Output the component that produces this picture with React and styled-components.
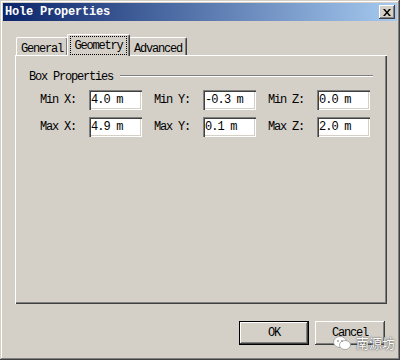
import React from 'react';
import styled, { createGlobalStyle } from 'styled-components';

const Global = createGlobalStyle`
  html, body { margin: 0; padding: 0; background: #D4D0C8; }
  body { font-family: "Liberation Mono", "DejaVu Sans Mono", monospace; }
`;

const Window = styled.div`
  position: relative;
  width: 400px;
  height: 360px;
  box-sizing: border-box;
  background: #d4d0c8;
  padding: 3px;
  display: flex;
  flex-direction: column;
  box-shadow: inset -1px -1px #404040, inset 1px 1px #d4d0c8,
    inset -2px -2px #808080, inset 2px 2px #ffffff;
`;

const TitleBar = styled.div`
  height: 18px;
  display: flex;
  align-items: center;
  justify-content: space-between;
  padding: 0 2px;
  background: linear-gradient(to right, #0a246a, #a6caf0);
`;

const Title = styled.span`
  color: #ffffff;
  font-weight: bold;
  font-size: 12px;
  letter-spacing: -0.2px;
  line-height: 18px;
`;

const CloseButton = styled.div`
  width: 16px;
  height: 14px;
  background: #d4d0c8;
  box-sizing: border-box;
  display: flex;
  align-items: center;
  justify-content: center;
  box-shadow: inset -1px -1px #404040, inset 1px 1px #ffffff,
    inset -2px -2px #808080;
`;

const Body = styled.div`
  flex: 1;
  display: flex;
  flex-direction: column;
  padding: 13px 10px 0 12px;
`;

const TabRow = styled.div`
  display: flex;
  align-items: flex-end;
  height: 21px;
  padding-left: 1px;
`;

const Tab = styled.div`
  position: relative;
  z-index: ${(p) => (p.$active ? 2 : 1)};
  box-sizing: border-box;
  width: ${(p) => p.$w}px;
  height: ${(p) => (p.$active ? 22 : 18)}px;
  margin: ${(p) => (p.$active ? '0 -1px -1px -1px' : '0')};
  background: #d4d0c8;
  border-top: 1px solid #ffffff;
  border-left: 1px solid #ffffff;
  border-right: 1px solid #404040;
  border-radius: 2px 2px 0 0;
  box-shadow: inset -1px 0 #808080;
  display: flex;
  align-items: ${(p) => (p.$active ? 'flex-start' : 'center')};
  justify-content: center;
  padding-top: ${(p) => (p.$active ? '2px' : '4px')};
  font-size: 12px;
  letter-spacing: -1.2px;
  color: #000;
`;

const FocusText = styled.span`
  outline: 1px dotted #000;
  padding: 2px 3px 1px 3px;
  line-height: 14px;
`;

const Panel = styled.div`
  height: 249px;
  box-sizing: border-box;
  background: #d4d0c8;
  box-shadow: inset 1px 1px #ffffff, inset -1px -1px #404040,
    inset -2px -2px #808080;
  padding: 16px 14px 0 14px;
  display: flex;
  flex-direction: column;
`;

const GroupHeader = styled.div`
  display: flex;
  align-items: center;
  height: 12px;
  font-size: 12px;
  letter-spacing: -1.2px;
`;

const GroupLine = styled.div`
  flex: 1;
  margin-left: 7px;
  border-top: 1px solid #808080;
  border-bottom: 1px solid #ffffff;
  margin-top: -2px;
`;

const Rows = styled.div`
  margin-top: 7px;
  padding-left: 11px;
  display: flex;
  flex-direction: column;
  gap: 7px;
`;

const Row = styled.div`
  display: flex;
  align-items: center;
  gap: 12px;
`;

const Field = styled.div`
  display: flex;
  align-items: center;
`;

const Label = styled.span`
  width: 49px;
  font-size: 12px;
  letter-spacing: -1.2px;
`;

const Input = styled.div`
  width: 53px;
  height: 20px;
  box-sizing: border-box;
  background: #ffffff;
  padding: 2px 0 0 2px;
  font-size: 12px;
  letter-spacing: -0.9px;
  line-height: 17px;
  box-shadow: inset 1px 1px #808080, inset 2px 2px #404040,
    inset -1px -1px #ffffff, inset -2px -2px #d4d0c8;
`;

const ButtonRow = styled.div`
  margin-top: 17px;
  display: flex;
  justify-content: flex-end;
  gap: 6px;
  padding-right: 2px;
`;

const Button = styled.div`
  width: 70px;
  height: 24px;
  box-sizing: border-box;
  background: #d4d0c8;
  display: flex;
  align-items: center;
  justify-content: center;
  font-size: 12px;
  letter-spacing: -1.2px;
  box-shadow: ${(p) =>
    p.$default
      ? 'inset 0 0 0 1px #000, inset -2px -2px #404040, inset 2px 2px #ffffff, inset -3px -3px #808080'
      : 'inset -1px -1px #404040, inset 1px 1px #ffffff, inset -2px -2px #808080'};
`;

const Watermark = styled.div`
  position: absolute;
  left: 333px;
  top: 333px;
  display: flex;
  align-items: center;
  gap: 5px;
  color: #ffffff;
  font-family: "Noto Sans CJK SC", sans-serif;
  font-size: 13px;
  text-shadow: 0 0 2px #555, 0 0 1px #555;
`;

const fields = [
  [
    ['Min X:', '4.0 m'],
    ['Min Y:', '-0.3 m'],
    ['Min Z:', '0.0 m'],
  ],
  [
    ['Max X:', '4.9 m'],
    ['Max Y:', '0.1 m'],
    ['Max Z:', '2.0 m'],
  ],
];

export default function App() {
  return (
    <>
      <Global />
      <Window>
        <TitleBar>
          <Title>Hole Properties</Title>
          <CloseButton>
            <svg width="8" height="7" viewBox="0 0 8 7">
              <path d="M0 0h2l2 2.5L6 0h2L5 3.5 8 7H6L4 4.5 2 7H0l3-3.5z" fill="#000" />
            </svg>
          </CloseButton>
        </TitleBar>
        <Body>
          <TabRow>
            <Tab $w={52}>General</Tab>
            <Tab $w={63} $active>
              <FocusText>Geometry</FocusText>
            </Tab>
            <Tab $w={58}>Advanced</Tab>
          </TabRow>
          <Panel>
            <GroupHeader>
              <span>Box Properties</span>
              <GroupLine />
            </GroupHeader>
            <Rows>
              {fields.map((row, i) => (
                <Row key={i}>
                  {row.map(([l, v]) => (
                    <Field key={l}>
                      <Label>{l}</Label>
                      <Input>{v}</Input>
                    </Field>
                  ))}
                </Row>
              ))}
            </Rows>
          </Panel>
          <ButtonRow>
            <Button $default>OK</Button>
            <Button>Cancel</Button>
          </ButtonRow>
        </Body>
        <Watermark>
          <svg width="18" height="14" viewBox="0 0 18 14">
            <ellipse cx="7" cy="6" rx="6.5" ry="5.5" fill="#fff" stroke="#999" strokeWidth="0.8" />
            <ellipse cx="12" cy="9" rx="5.5" ry="4.5" fill="#fff" stroke="#999" strokeWidth="0.8" />
            <circle cx="5" cy="5" r="0.9" fill="#999" />
            <circle cx="9" cy="5" r="0.9" fill="#999" />
          </svg>
          <span>南源坊</span>
        </Watermark>
      </Window>
    </>
  );
}
